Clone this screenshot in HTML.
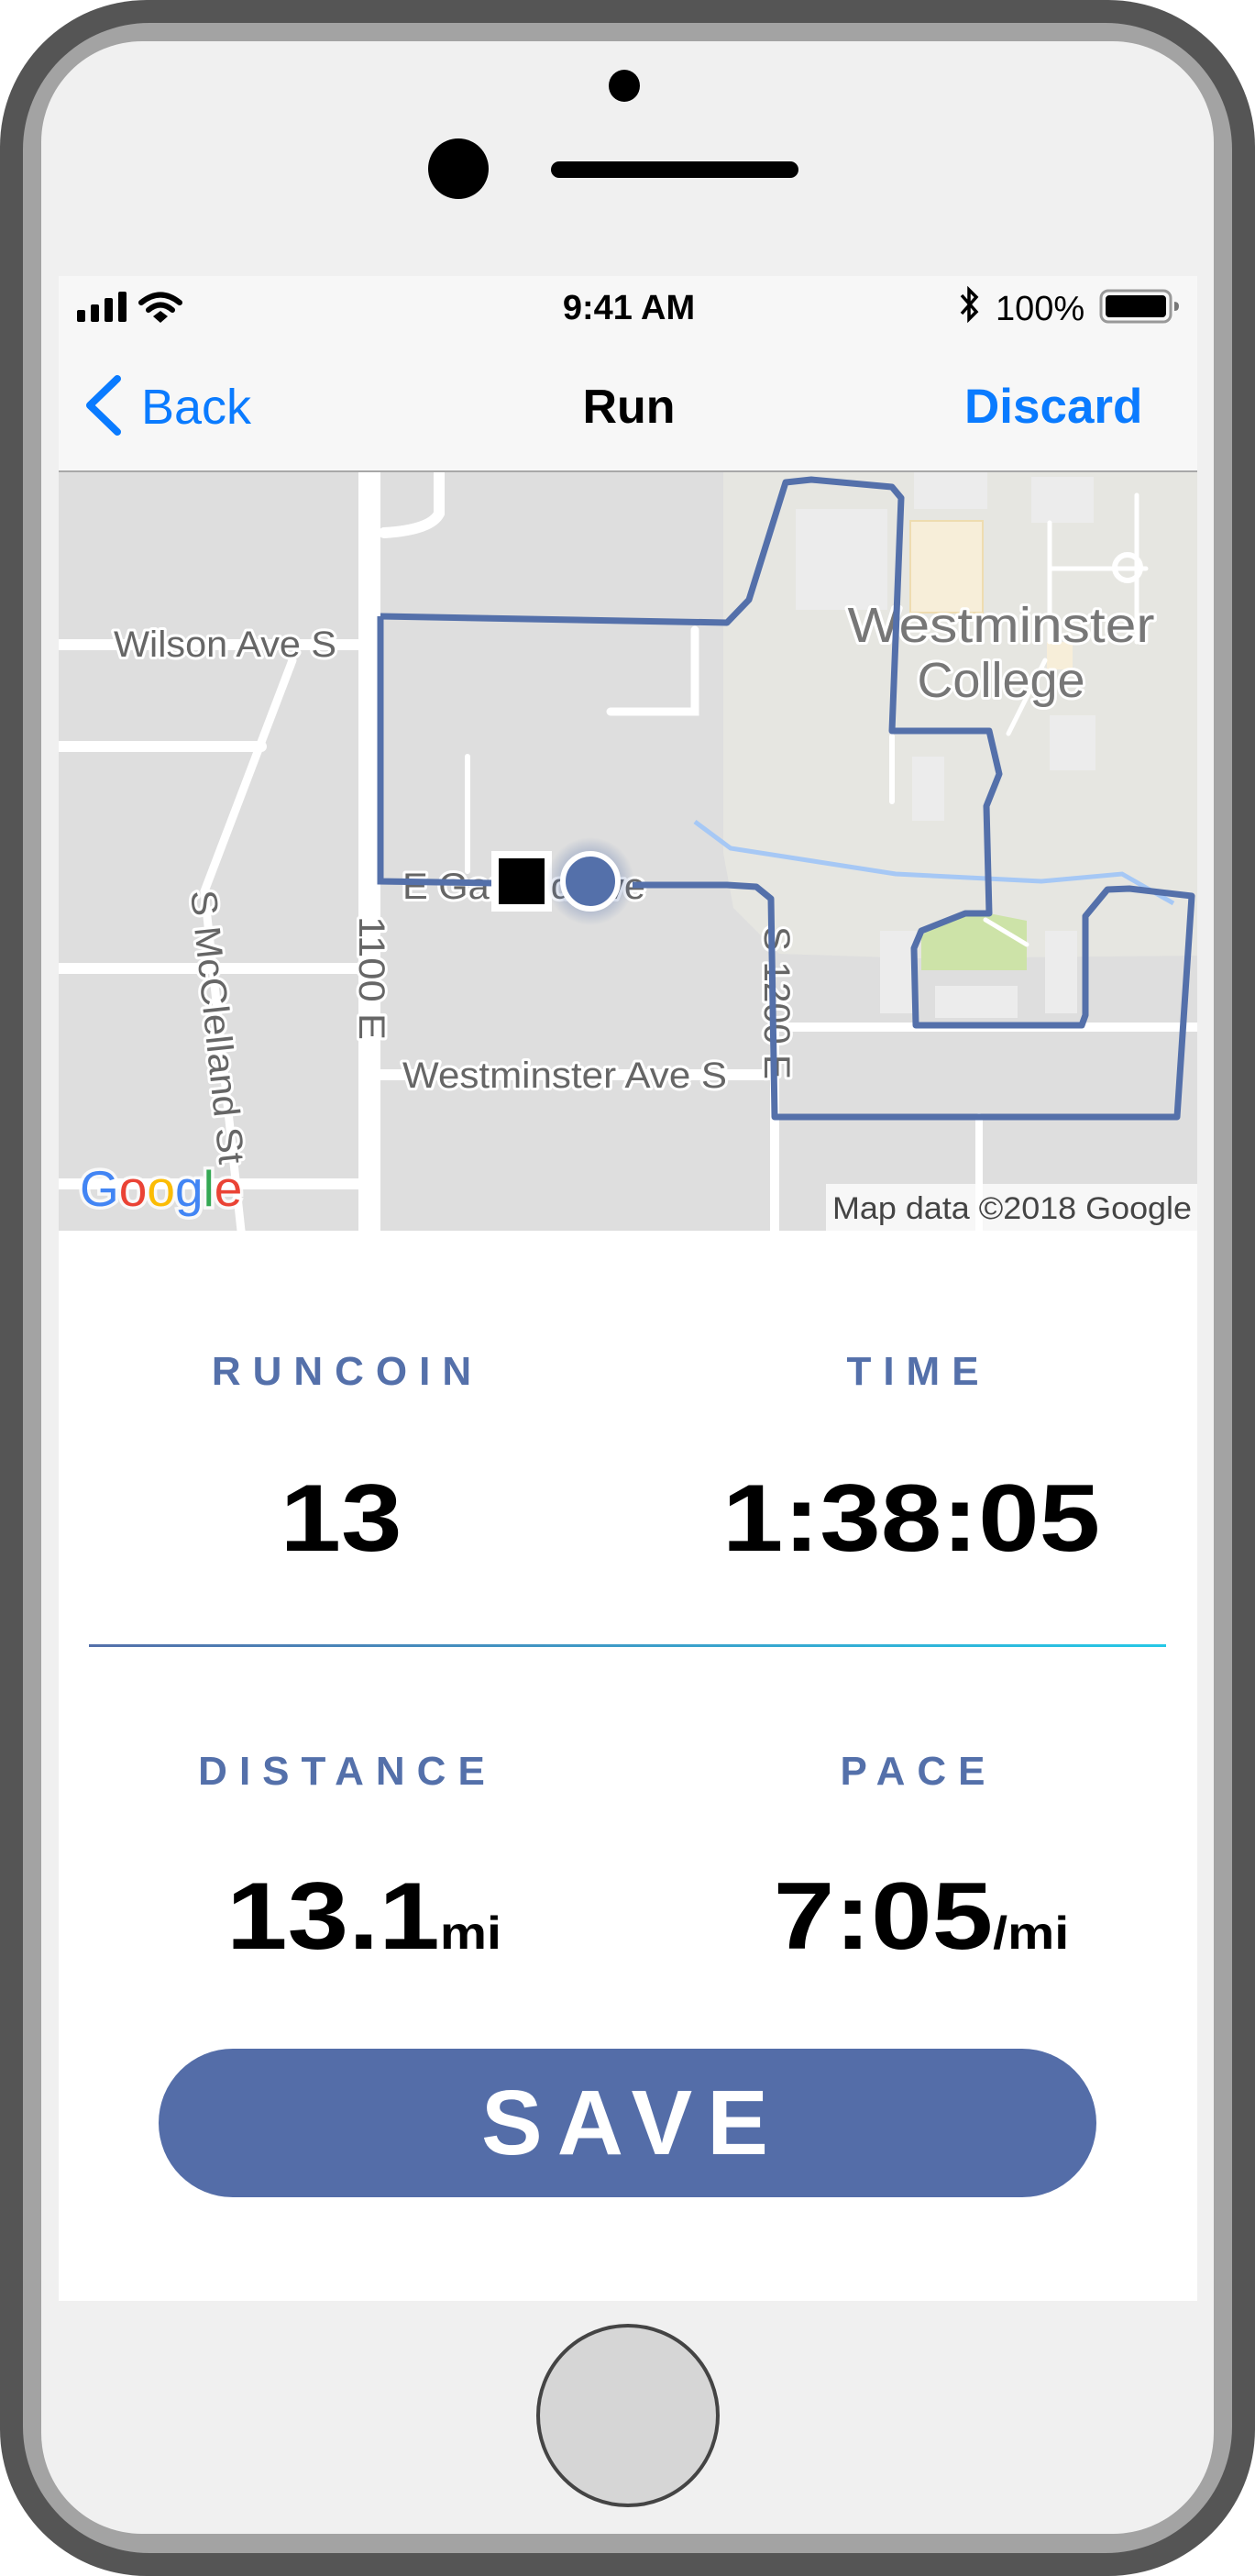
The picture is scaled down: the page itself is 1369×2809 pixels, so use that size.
<!DOCTYPE html>
<html><head><meta charset="utf-8"><style>
html,body{margin:0;padding:0;}
body{width:1369px;height:2809px;position:relative;overflow:hidden;background:#fff;font-family:"Liberation Sans",sans-serif;}
.abs{position:absolute;}
.lbl{position:absolute;width:400px;text-align:center;color:#5470aa;font-weight:bold;font-size:44px;letter-spacing:13px;line-height:1;}
.val{position:absolute;width:600px;text-align:center;color:#000;font-weight:bold;font-size:104px;line-height:1;transform:scaleX(1.15);}
.val small{font-size:50px;}
</style></head><body>
<div class="abs" style="left:0;top:0;width:1369px;height:2809px;background:#555;border-radius:160px;"></div>
<div class="abs" style="left:25px;top:25px;width:1319px;height:2759px;background:#a3a3a3;border-radius:138px;"></div>
<div class="abs" style="left:45px;top:45px;width:1279px;height:2718px;background:#f0f0f0;border-radius:110px;"></div>
<div class="abs" style="left:664px;top:76px;width:34px;height:35px;background:#000;border-radius:50%;"></div>
<div class="abs" style="left:467px;top:151px;width:66px;height:66px;background:#000;border-radius:50%;"></div>
<div class="abs" style="left:601px;top:176px;width:270px;height:18px;background:#000;border-radius:9px;"></div>
<div class="abs" style="left:585px;top:2534px;width:192px;height:192px;background:#d6d6d6;border:4px solid #444;border-radius:50%;"></div>
<div class="abs" style="left:64px;top:301px;width:1242px;height:2208px;background:#fff;"></div>
<div class="abs" style="left:64px;top:301px;width:1242px;height:212px;background:#f7f7f7;border-bottom:2px solid #a8a8a8;"></div>
<svg class="abs" style="left:84px;top:316px" width="120" height="38" viewBox="0 0 120 38">
<rect x="0" y="22" width="9" height="13" rx="2"/><rect x="15" y="16" width="9" height="19" rx="2"/><rect x="30" y="9" width="9" height="26" rx="2"/><rect x="45" y="2" width="9" height="33" rx="2"/>
<path d="M70 14 Q91 -3 112 14" stroke="#000" stroke-width="6" fill="none" stroke-linecap="round"/>
<path d="M78 22 Q91 11 104 22" stroke="#000" stroke-width="6" fill="none" stroke-linecap="round"/>
<path d="M83 29 L91 23 L99 29 L91 36 Z"/>
</svg>
<div class="abs" style="left:486px;top:314px;width:400px;text-align:center;font-size:38px;font-weight:bold;line-height:44px;">9:41 AM</div>
<svg class="abs" style="left:1045px;top:311px" width="26" height="42" viewBox="0 0 26 42"><path d="M4 11 L20 29 L12 37 L12 5 L20 13 L4 31" stroke="#000" stroke-width="3.5" fill="none"/></svg>
<div class="abs" style="left:1086px;top:315px;font-size:38px;line-height:44px;">100%</div>
<svg class="abs" style="left:1198px;top:314px" width="92" height="42" viewBox="0 0 92 42"><rect x="3" y="3" width="76" height="34" rx="8" fill="none" stroke="#999" stroke-width="3"/><rect x="8" y="8" width="66" height="24" rx="4"/><path d="M83 15 Q88 15 88 20 Q88 25 83 25Z" fill="#777"/></svg>
<svg class="abs" style="left:88px;top:405px" width="50" height="74" viewBox="0 0 50 74"><path d="M40 8 L10 37 L40 66" stroke="#0a7bff" stroke-width="8" fill="none" stroke-linecap="round" stroke-linejoin="round"/></svg>
<div class="abs" style="left:154px;top:412px;font-size:54px;color:#0a7bff;line-height:64px;">Back</div>
<div class="abs" style="left:486px;top:412px;width:400px;text-align:center;font-size:52px;font-weight:bold;line-height:64px;">Run</div>
<div class="abs" style="left:1052px;top:412px;font-size:53px;font-weight:bold;color:#0a7bff;line-height:64px;">Discard</div>
<svg class="abs" style="left:64px;top:515px" width="1242" height="827" viewBox="64 515 1242 827" font-family="Liberation Sans,sans-serif">
<defs><radialGradient id="gl"><stop offset="0.5" stop-color="#5470aa" stop-opacity="0.45"/><stop offset="1" stop-color="#5470aa" stop-opacity="0"/></radialGradient></defs>
<rect x="64" y="515" width="1242" height="827" fill="#dedede"/>
<path d="M789 515 L1306 515 L1306 1042 L1000 1045 L850 1040 L800 990 L789 930 Z" fill="#e6e6e1"/>
<g fill="#ececec">
<rect x="868" y="555" width="100" height="110"/><rect x="997" y="515" width="80" height="40"/><rect x="1125" y="520" width="68" height="50"/>
<rect x="1145" y="780" width="50" height="60"/><rect x="995" y="825" width="35" height="70"/>
<rect x="960" y="1015" width="40" height="90"/><rect x="1140" y="1015" width="35" height="90"/><rect x="1020" y="1075" width="90" height="35"/>
</g>
<rect x="993" y="568" width="79" height="100" fill="#f7eed9" stroke="#eedcb0" stroke-width="2"/>
<rect x="1142" y="700" width="28" height="30" fill="#f7eed9"/>
<path d="M1005 1020 Q1040 996 1079 996 L1120 1004 L1120 1058 L1005 1058 Z" fill="#cde3a8"/>
<g stroke="#fff" fill="none" stroke-linecap="round">
<path d="M403 515 V1342" stroke-width="24"/>
<path d="M64 703 H403" stroke-width="12"/>
<path d="M64 814 H285" stroke-width="12"/>
<path d="M64 1056 H403" stroke-width="12"/>
<path d="M64 1291 H403" stroke-width="12"/>
<path d="M415 1172 H845" stroke-width="12"/>
<path d="M845 1118 V1342" stroke-width="10"/>
<path d="M845 1120 H1306" stroke-width="10"/>
<path d="M1068 1218 V1342" stroke-width="8"/>
<path d="M319 720 L223 972 L263 1342" stroke-width="9"/>
<path d="M479 515 V560 Q470 578 419 581" stroke-width="12"/>
<path d="M758 687 V776 H666" stroke-width="9"/>
<path d="M510 825 V950" stroke-width="6"/>
<path d="M973 803 V874" stroke-width="6"/>
<path d="M1145 570 V700 M1145 620 H1250 M1240 540 L1240 700 M1100 800 L1140 720 M1075 1003 L1120 1030" stroke-width="5"/>
</g>
<circle cx="1230" cy="619" r="14" fill="none" stroke="#fff" stroke-width="6"/>
<path d="M758 896 L797 925 L977 953 L1136 961 L1224 953 L1280 985" stroke="#a6c8f5" stroke-width="5" fill="none"/>
<g fill="#666" stroke="#fff" stroke-width="6" paint-order="stroke" stroke-linejoin="round">
<text x="124" y="716" font-size="40" textLength="243" lengthAdjust="spacingAndGlyphs">Wilson Ave S</text>
<text x="439" y="1186" font-size="40" textLength="354" lengthAdjust="spacingAndGlyphs">Westminster Ave S</text>
<text x="439" y="980" font-size="40" textLength="265" lengthAdjust="spacingAndGlyphs">E Garfield Ave</text>
<text transform="translate(392,999) rotate(90)" font-size="40" textLength="135" lengthAdjust="spacingAndGlyphs">1100 E</text>
<text transform="translate(834,1010) rotate(90)" font-size="40" textLength="167" lengthAdjust="spacingAndGlyphs">S 1200 E</text>
<text transform="translate(208,972) rotate(84)" font-size="40" textLength="300" lengthAdjust="spacingAndGlyphs">S McClelland St</text>
<text x="1092" y="700" font-size="54" text-anchor="middle" fill="#777" textLength="335" lengthAdjust="spacingAndGlyphs">Westminster</text>
<text x="1092" y="760" font-size="54" text-anchor="middle" fill="#777">College</text>
</g>
<path d="M415 672 L793 679 L817 654 L857 526 L885 523 L973 531 L983 543 L973 797 L1079 797 L1090 844 L1076 879 L1079 996 L1053 996 L1005 1015 L997 1034 L999 1118 L1180 1118 L1184 1107 L1184 999 L1208 970 L1232 969 L1300 977 L1284 1218 L845 1218 L841 980 L825 967 L793 965 L690 965" stroke="#5470aa" stroke-width="7" fill="none" stroke-linejoin="round"/>
<path d="M415 672 L415 961 L538 963" stroke="#5470aa" stroke-width="7" fill="none"/>
<rect x="536" y="928" width="66" height="66" fill="#fff"/><rect x="544" y="936" width="50" height="50" fill="#000"/>
<circle cx="644" cy="961" r="48" fill="url(#gl)"/>
<circle cx="644" cy="961" r="30" fill="#5470aa" stroke="#fff" stroke-width="6"/>
<g stroke="#fff" stroke-width="7" paint-order="stroke" font-size="55" stroke-opacity="0.8">
<text x="87" y="1315"><tspan fill="#4285f4">G</tspan><tspan fill="#ea4335">o</tspan><tspan fill="#fbbc05">o</tspan><tspan fill="#4285f4">g</tspan><tspan fill="#34a853">l</tspan><tspan fill="#ea4335">e</tspan></text>
</g>
<rect x="901" y="1291" width="405" height="51" fill="#fff" fill-opacity="0.75"/>
<text x="908" y="1329" font-size="34" fill="#444" textLength="392" lengthAdjust="spacingAndGlyphs">Map data ©2018 Google</text>
</svg>
<div class="lbl" style="left:179px;top:1474px;">RUNCOIN</div>
<div class="lbl" style="left:802px;top:1474px;">TIME</div>
<div class="val" style="left:72px;top:1604px;">13</div>
<div class="val" style="left:694px;top:1604px;">1:38:05</div>
<div class="abs" style="left:97px;top:1793px;width:1175px;height:3px;background:linear-gradient(90deg,#5470aa,#25c8e6);"></div>
<div class="lbl" style="left:179px;top:1910px;">DISTANCE</div>
<div class="lbl" style="left:802px;top:1910px;">PACE</div>
<div class="val" style="left:97px;top:2038px;">13.1<small>mi</small></div>
<div class="val" style="left:705px;top:2038px;">7:05<small>/mi</small></div>
<div class="abs" style="left:173px;top:2234px;width:1023px;height:162px;background:#546da8;border-radius:81px;color:#fff;font-weight:bold;font-size:100px;line-height:162px;text-align:center;letter-spacing:16px;text-indent:10px;">SAVE</div>
</body></html>
